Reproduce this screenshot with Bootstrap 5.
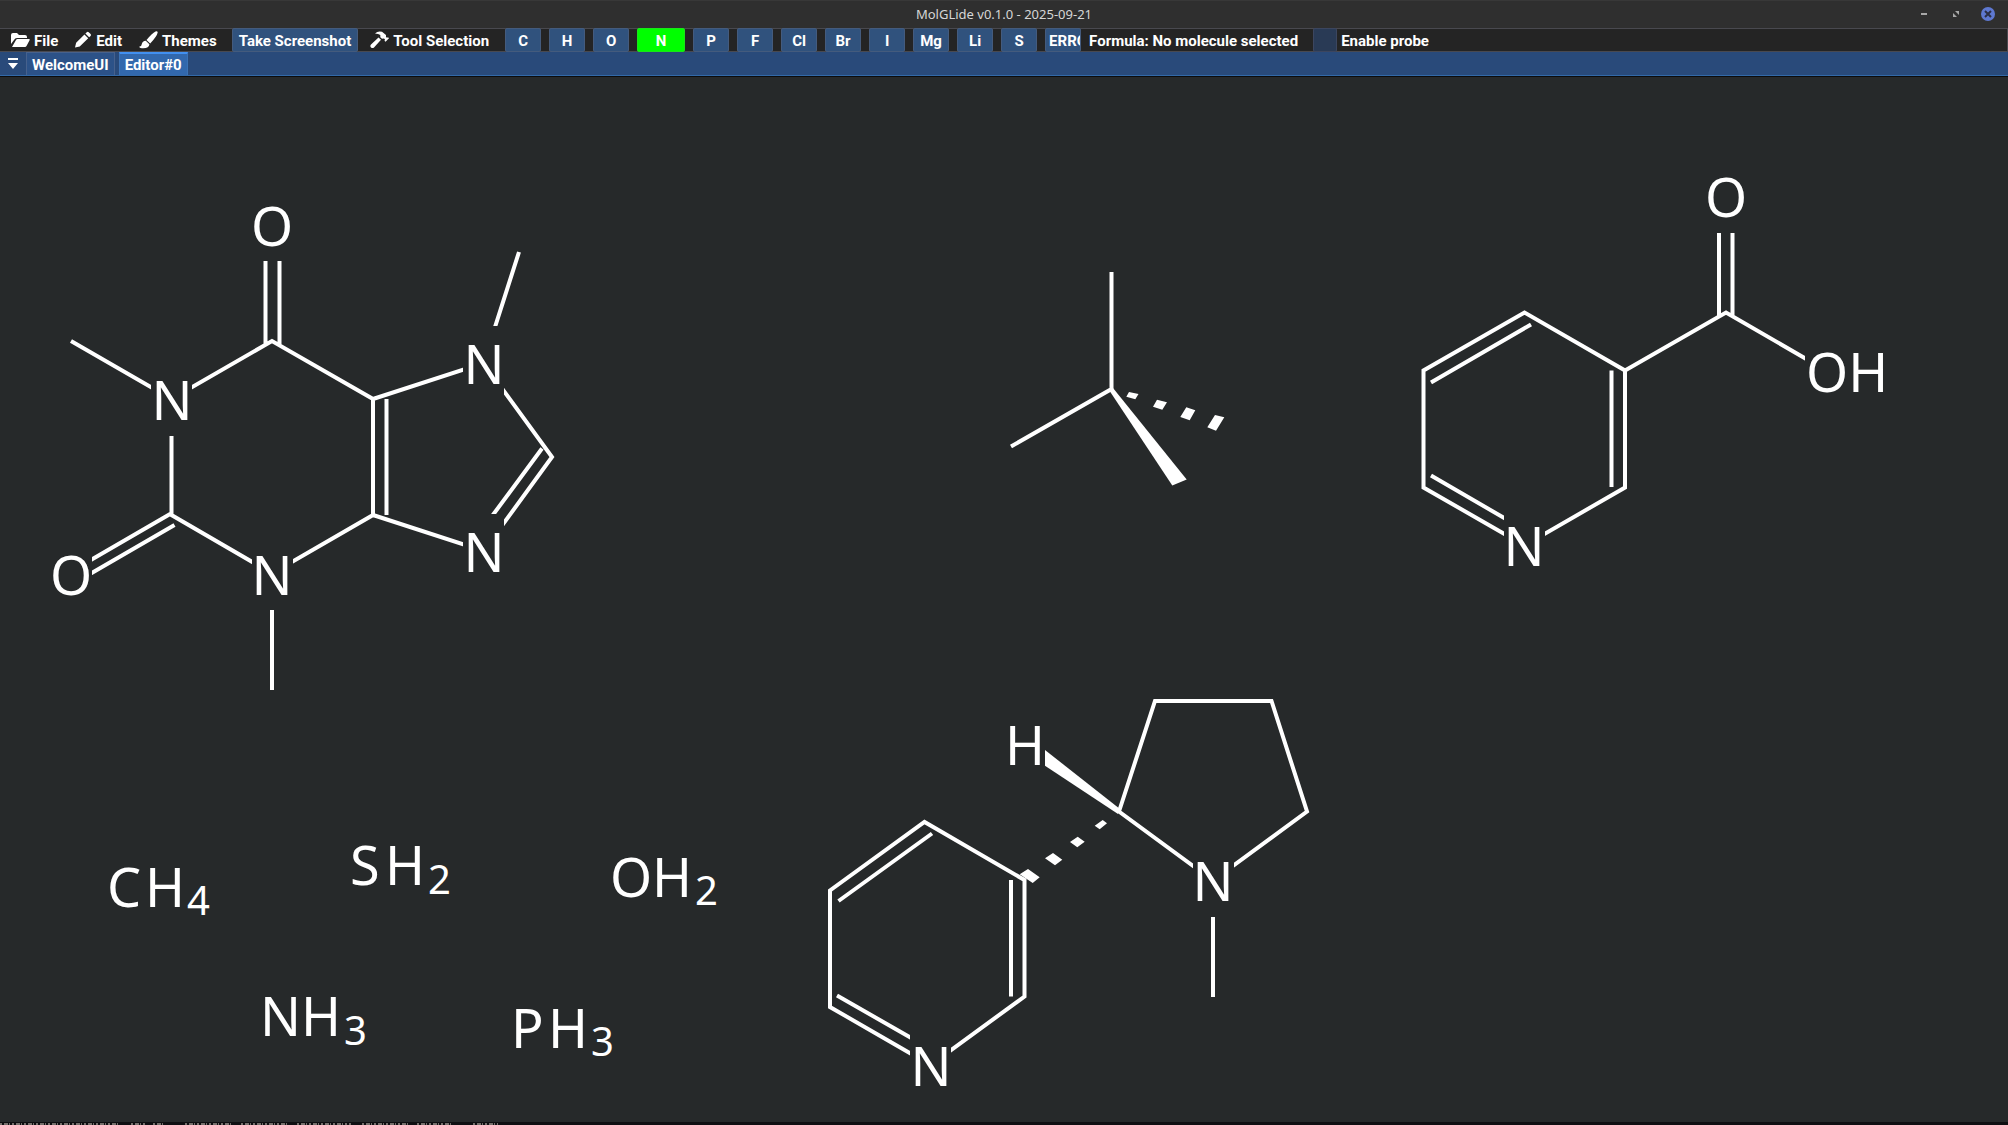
<!DOCTYPE html>
<html lang="en" data-bs-theme="dark">
<head>
<meta charset="utf-8">
<meta name="viewport" content="width=device-width, initial-scale=1">
<title>MolGLide v0.1.0 - 2025-09-21</title>
<link rel="stylesheet" href="https://cdn.jsdelivr.net/npm/bootstrap@5.3.0/dist/css/bootstrap.min.css">
<style>
  body { background: #26292a; color: #fff; font: 700 15px/24px Roboto, "Liberation Sans", sans-serif; }
  button { font: inherit; color: #fff; }
  .titlebar { height: 28px; background: #2f2f2f; border-top: 1px solid #383838; color: #d6d6d6; font: 400 13px/27px "Noto Sans", sans-serif; }
  .win-controls { right: 13px; top: 6px; gap: 18px; }
  .win-controls button { width: 14px; height: 14px; padding: 0; border: 0; background: none; line-height: 0; }
  .win-controls svg { display: block; width: 14px; height: 14px; }
  .toolbar { height: 24px; background: #242424; border: 1px solid #49494f; border-left: 0; padding-left: 11px; }
  .toolbar > span, .toolbar > label { padding-top: 1px; }
  .menus { gap: 17px; margin-right: 15px; }
  .menu-btn { border: 0; background: none; padding: 1px 0 0; height: 22px; gap: 4px; }
  .menu-btn svg { width: 19px; height: 18px; margin-top: -2px; fill: #fff; }
  .menu-btn .slim { width: 17px; }
  .tool-menu { margin: 0 16px 0 12px; }
  .tool-btn { height: 24px; margin: -1px 0; border: 1px solid #445b7d; border-radius: 2px; background: #30527d; padding: 1px 3px 0; line-height: 22px; }
  .tool-btn.capture { padding: 1px 6px 0; }
  .elements { gap: 8px; }
  .elements .tool-btn { width: 36px; overflow: hidden; }
  .elements .tool-btn.chosen { width: 48px; background: #0f0; border-color: #19e619; }
  .formula { margin: 0 15px 0 8px; }
  .probe-box { appearance: none; width: 24px; height: 24px; margin: -1px 0; border: 1px solid #3c465f; border-radius: 2px; background: #293a55; }
  .probe-box:checked { background: #4296fa; }
  .tabbar { height: 24px; background: #294a7a; border-bottom: 1px solid #3269a8; padding-left: 6px; box-shadow: 0 1px #0b0c0d; }
  .tab-btn { height: 23px; border: 1px solid #46618d; border-bottom: 0; background: #2c5288; padding: 1px 5px 0; line-height: 22px; }
  .tab-btn.current { border-color: #3b72b5; border-top: 2px solid #4290f0; background: #3268ad; line-height: 20px; }
  .tab-list { width: 12px; height: 23px; border: 0; background: none; padding: 0; line-height: 0; }
  .editor { min-height: 0; margin-top: 1px; }
  .editor svg { width: 100%; height: 100%; }
  .bonds { stroke: #fff; stroke-width: 4; fill: none; }
  .wedges { fill: #fff; }
  .masks { fill: #26292a; }
  .atoms { font: 400 54px "Noto Sans", "Open Sans", sans-serif; fill: #fff; }
  .atoms .mid { text-anchor: middle; }
  .atoms .count { font-size: 40px; }
  .footline { height: 3px; background: #0f0f12; }
</style>
</head>
<body class="d-flex flex-column vh-100 overflow-hidden">
<header class="titlebar position-relative text-center flex-shrink-0">
  MolGLide v0.1.0 - 2025-09-21
  <div class="win-controls position-absolute d-flex">
    <button type="button" aria-label="Minimize"><svg viewBox="0 0 14 14"><path d="M4 6h6v2H4z" fill="#a8a8a8"/></svg></button>
    <button type="button" aria-label="Restore"><svg viewBox="0 0 14 14"><path d="M6 4h4v4zM4 6v4h4z" fill="#a8a8a8"/></svg></button>
    <button type="button" aria-label="Close"><svg viewBox="0 0 14 14"><circle cx="7" cy="7" r="7" fill="#5e78d0"/><path d="m4 4 6 6m0-6-6 6" stroke="#2b2f45" stroke-width="2"/></svg></button>
  </div>
</header>

<nav class="toolbar d-flex align-items-center flex-shrink-0 text-nowrap" aria-label="Tools">
  <div class="menus d-flex">
    <button type="button" class="menu-btn d-flex align-items-center"><svg viewBox="0 0 19 18"><path d="M0 13V4q0-2 2-2h4l2 2h6q2 0 2 2v1H6Q4 7 3 9zM1 16l4-7q.5-1 1.500-1H18q1 0 .7 1l-3.200 6q-.5 1-1.500 1z"/></svg>File</button>
    <button type="button" class="menu-btn d-flex align-items-center"><svg class="slim" viewBox="1 0 18 18"><path d="M1 17l1.200-5L11 3.200l4 4L6 16zM12 2.200l1.500-1.500q1-.9 2 0l2 2q.9 1 0 2L16 6.200z"/></svg>Edit</button>
    <button type="button" class="menu-btn d-flex align-items-center"><svg viewBox="0 0 19 18"><path d="M7.500 9Q13 2 16.500.4q2-.7 2.200 1Q18 5 11.200 12.500zM6.800 9.800l3.600 3.500Q10 18 1.500 17 0 16.500.5 15.500q2 0 2.300-2.500.5-3 4-3.200z"/></svg>Themes</button>
  </div>
  <button type="button" class="tool-btn capture">Take Screenshot</button>
  <button type="button" class="menu-btn tool-menu d-flex align-items-center"><svg viewBox="0 0 19 18"><path d="M5 2.500Q8-.5 12 .8l4 3.200v2l1 .8 1-.6 1 1-3.500 3.500-1-1 .5-1.200-1-1-2 .2-1.700-1.500V4Q8.500 2.500 5 2.500zM8.500 6.500l2.500 2.300L4 16.500q-1.500 1.200-3-.1-1.300-1.500 0-3z"/></svg>Tool Selection</button>
  <div class="elements d-flex align-items-center" role="group" aria-label="Element">
    <button type="button" class="tool-btn">C</button>
    <button type="button" class="tool-btn">H</button>
    <button type="button" class="tool-btn">O</button>
    <button type="button" class="tool-btn chosen">N</button>
    <button type="button" class="tool-btn">P</button>
    <button type="button" class="tool-btn">F</button>
    <button type="button" class="tool-btn">Cl</button>
    <button type="button" class="tool-btn">Br</button>
    <button type="button" class="tool-btn">I</button>
    <button type="button" class="tool-btn">Mg</button>
    <button type="button" class="tool-btn">Li</button>
    <button type="button" class="tool-btn">S</button>
    <button type="button" class="tool-btn text-start">ERROR</button>
  </div>
  <span class="formula">Formula: No molecule selected</span>
  <input class="probe-box" type="checkbox" id="probe"><label class="ms-1" for="probe">Enable probe</label>
</nav>

<div class="tabbar d-flex flex-shrink-0 text-nowrap">
  <button type="button" class="tab-list me-2" aria-label="Tab list"><svg width="12" height="23" viewBox="0 0 12 23" fill="#fff"><path d="M2 6h10v2H2zM2 11h10l-5 6z"/></svg></button>
  <button type="button" class="tab-btn me-1">WelcomeUI</button>
  <button type="button" class="tab-btn current">Editor#0</button>
</div>

<main class="editor flex-grow-1">
<svg viewBox="0 77 2008 1045" role="img" aria-label="Molecule editor canvas">
  <g class="bonds">
    <!-- caffeine -->
    <path d="M71 341 171.500 399 272 341 373 399V515L272 573.500 171.500 515V399M373 399 483.500 363 552 457 483.500 551 373 515M386.500 399V515M542 448.500 484 527M483.500 363 519 252M272 573V690M265.500 230V344M279.500 230V344M171 513.500 71 571.500M174.500 525 71 585"/>
    <!-- tetrahedral centre -->
    <path d="M1111.500 272V389L1011 446.500"/>
    <!-- nicotinic acid -->
    <path d="M1524.500 545.500 1423.500 487.500V370.500L1524.500 312.500 1625 370.500V487.500ZM1625 370.500 1726 312.500 1827 371M1719 210V316M1732.500 210V316M1431 382.500 1531 324.500M1611.500 370.500V487M1431 475.500 1518 526"/>
    <!-- nicotine -->
    <path d="M1119 811.500 1155 701H1271.500L1307 811.500 1213 880.500ZM1213 880V997M930.500 1065 830 1007V890.500L924.500 822 1024.500 880V996.500ZM838.500 901 932 833.500M1011 880V996.500M837 995.500 927 1047"/>
  </g>
  <g class="wedges">
    <path d="M1109 390 1113 388 1186.700 479.500 1172.300 485.500Z"/>
    <path d="M1129 392 1138.500 394 1135.300 399.300 1126.300 396.700ZM1157 399.700 1167 402.300 1162.300 409.700 1153 406.700ZM1186.300 407.300 1195.300 410.300 1189.700 420.300 1180.300 417ZM1215 415 1224.300 417.300 1216 430.700 1207.300 427.300Z"/>
    <path d="M1120 809 1118 814 1045 765.700V750Z"/>
    <path d="M1102.700 820 1107 823.300 1099.700 829.300 1094.700 825.700ZM1077.700 836.700 1084.700 841.700 1077.300 847.300 1070 842ZM1053 853 1062.300 859.700 1055 865.300 1045 858.300ZM1028 869 1039.700 877.300 1032.700 883 1019.700 874.300Z"/>
  </g>
  <g class="masks">
    <rect x="251" y="188" width="42" height="73"/><rect x="151" y="362" width="41" height="74"/>
    <rect x="50" y="537" width="42" height="73"/><rect x="252" y="537" width="41" height="73"/>
    <rect x="463" y="326" width="41" height="74"/><rect x="463" y="514" width="41" height="74"/>
    <rect x="1705" y="160" width="42" height="73"/><rect x="1805" y="334" width="82" height="74"/>
    <rect x="1504" y="509" width="41" height="73"/><rect x="1193" y="844" width="41" height="73"/>
    <rect x="910" y="1029" width="41" height="73"/>
  </g>
  <g class="atoms">
    <text class="mid" x="272" y="246">O</text><text class="mid" x="172" y="420">N</text>
    <text class="mid" x="71" y="595">O</text><text class="mid" x="272" y="595">N</text>
    <text class="mid" x="484" y="384">N</text><text class="mid" x="484" y="572">N</text>
    <text class="mid" x="1726" y="217">O</text><text x="1806" y="392">OH</text>
    <text class="mid" x="1524" y="566">N</text>
    <text class="mid" x="1025" y="765">H</text><text class="mid" x="1213" y="901">N</text>
    <text class="mid" x="931" y="1086">N</text>
    <text y="907"><tspan x="107">C</tspan><tspan x="145">H</tspan><tspan class="count" x="187" y="915">4</tspan></text>
    <text y="885"><tspan x="350">S</tspan><tspan x="385">H</tspan><tspan class="count" x="428" y="894">2</tspan></text>
    <text y="897"><tspan x="610">O</tspan><tspan x="652">H</tspan><tspan class="count" x="695" y="905">2</tspan></text>
    <text y="1036"><tspan x="260">N</tspan><tspan x="301">H</tspan><tspan class="count" x="344" y="1045">3</tspan></text>
    <text y="1048"><tspan x="511">P</tspan><tspan x="548">H</tspan><tspan class="count" x="591" y="1056">3</tspan></text>
  </g>
</svg>
</main>
<footer class="footline flex-shrink-0"><svg class="d-block" width="500" height="3" aria-hidden="true"><path d="M0 2h119M131 2h16M153 2h12M185 2h46M241 2h46M297 2h54M362 2h48M417 2h36M473 2h25" stroke="#75706c" stroke-width="2" stroke-dasharray="2 2 4 1 1 2"/></svg></footer>
<script src="https://cdn.jsdelivr.net/npm/bootstrap@5.3.0/dist/js/bootstrap.bundle.min.js"></script>
</body>
</html>
